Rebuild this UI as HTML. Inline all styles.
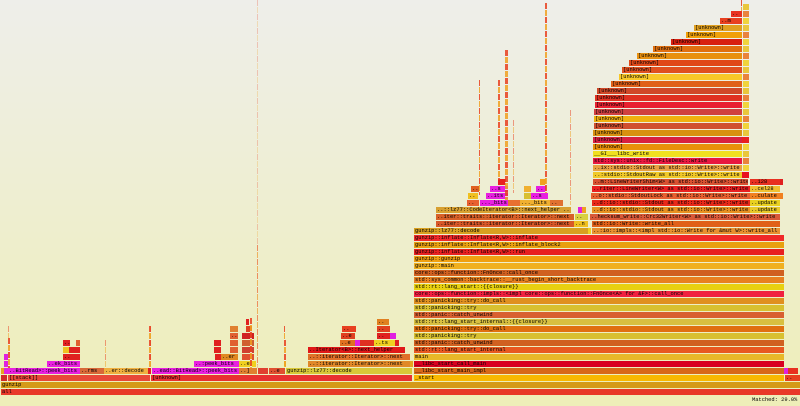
<!DOCTYPE html>
<html><head><meta charset="utf-8"><style>
body{margin:0;width:800px;height:406px;overflow:hidden;background:linear-gradient(#eeeeea,#eeeeb8);position:relative;font-family:"Liberation Mono",monospace}
.b{position:absolute;height:6px;font-size:5.4px;line-height:6.5px;overflow:hidden;white-space:nowrap;padding-left:1px;color:#000;box-sizing:border-box}
.s{position:absolute;width:2px;background:repeating-linear-gradient(#e84020 0 6px,#eee 6px 7px,#f0a020 7px 13px,#eee 13px 14px);opacity:.85}
</style></head><body>
<div class="b" style="top:389px;left:1px;width:799px;background:#e83828">all</div>
<div class="b" style="top:382px;left:1px;width:799px;background:#d49a18">gunzip</div>
<div class="b" style="top:375px;left:1px;width:6px;background:#d02828"></div>
<div class="b" style="top:375px;left:8px;width:142px;background:#e84838">[[stack]]</div>
<div class="b" style="top:375px;left:151px;width:261px;background:#e83030">[unknown]</div>
<div class="b" style="top:375px;left:414px;width:370px;background:#f8b800">_start</div>
<div class="b" style="top:375px;left:785px;width:15px;background:#e84020">..</div>
<div class="b" style="top:368px;left:1px;width:3px;background:#e8a020"></div>
<div class="b" style="top:368px;left:4px;width:4px;background:#e020e0"></div>
<div class="b" style="top:368px;left:8px;width:72px;background:#e820e0">..BitRead&gt;::peek_bits</div>
<div class="b" style="top:368px;left:80px;width:24px;background:#d86838">..rms</div>
<div class="b" style="top:368px;left:104px;width:44px;background:#f0b040">..er::decode</div>
<div class="b" style="top:368px;left:148px;width:3px;background:#e02020"></div>
<div class="b" style="top:368px;left:152px;width:87px;background:#e820e0">..ead::BitRead&gt;::peek_bits</div>
<div class="b" style="top:368px;left:239px;width:18px;background:#e08030">..]</div>
<div class="b" style="top:368px;left:258px;width:10px;background:#e04030"></div>
<div class="b" style="top:368px;left:269px;width:16px;background:#e05030">..e</div>
<div class="b" style="top:368px;left:286px;width:126px;background:#d8c838">gunzip::lz77::decode</div>
<div class="b" style="top:368px;left:414px;width:370px;background:#d86818">__libc_start_main_impl</div>
<div class="b" style="top:368px;left:784px;width:4px;background:#e020e0"></div>
<div class="b" style="top:368px;left:788px;width:10px;background:#e83020"></div>
<div class="b" style="top:361px;left:4px;width:4px;background:#e020e0"></div>
<div class="b" style="top:361px;left:47px;width:33px;background:#e820e0">..ek_bits</div>
<div class="b" style="top:361px;left:194px;width:45px;background:#e820e0">..:peek_bits</div>
<div class="b" style="top:361px;left:239px;width:17px;background:#f0d020">..e</div>
<div class="b" style="top:361px;left:284px;width:2px;background:#e0c040"></div>
<div class="b" style="top:361px;left:308px;width:102px;background:#e08828">..::iterator::Iterator&gt;::next</div>
<div class="b" style="top:361px;left:410px;width:3px;background:#e8a020"></div>
<div class="b" style="top:361px;left:414px;width:370px;background:#d80020">__libc_start_call_main</div>
<div class="b" style="top:354px;left:4px;width:4px;background:#e020e0"></div>
<div class="b" style="top:354px;left:63px;width:17px;background:#e02020">..</div>
<div class="b" style="top:354px;left:215px;width:6px;background:#e02020"></div>
<div class="b" style="top:354px;left:221px;width:17px;background:#e08820">..er</div>
<div class="b" style="top:354px;left:242px;width:12px;background:#e05030"></div>
<div class="b" style="top:354px;left:308px;width:102px;background:#e07028">..::iterator::Iterator&gt;::next</div>
<div class="b" style="top:354px;left:414px;width:370px;background:#e8b828">main</div>
<div class="b" style="top:347px;left:63px;width:6px;background:#f0c020"></div>
<div class="b" style="top:347px;left:69px;width:11px;background:#e02020"></div>
<div class="b" style="top:347px;left:214px;width:7px;background:#e02020"></div>
<div class="b" style="top:347px;left:230px;width:8px;background:#e06030"></div>
<div class="b" style="top:347px;left:242px;width:12px;background:#d04030"></div>
<div class="b" style="top:347px;left:308px;width:97px;background:#e01818">..Iterator&lt;B&gt;::next_helper</div>
<div class="b" style="top:347px;left:414px;width:370px;background:#e85820">std::rt::lang_start_internal</div>
<div class="b" style="top:340px;left:63px;width:7px;background:#e02020">..</div>
<div class="b" style="top:340px;left:76px;width:4px;background:#e06030"></div>
<div class="b" style="top:340px;left:214px;width:7px;background:#e02020"></div>
<div class="b" style="top:340px;left:230px;width:8px;background:#e06030"></div>
<div class="b" style="top:340px;left:242px;width:12px;background:#d06030"></div>
<div class="b" style="top:340px;left:340px;width:15px;background:#e07020">..e</div>
<div class="b" style="top:340px;left:355px;width:5px;background:#e020e0"></div>
<div class="b" style="top:340px;left:360px;width:14px;background:#e03020"></div>
<div class="b" style="top:340px;left:374px;width:21px;background:#f0d020">..ts</div>
<div class="b" style="top:340px;left:395px;width:4px;background:#e02020"></div>
<div class="b" style="top:340px;left:414px;width:370px;background:#d06020">std::panic::catch_unwind</div>
<div class="b" style="top:333px;left:230px;width:8px;background:#e06030">..</div>
<div class="b" style="top:333px;left:242px;width:12px;background:#d02020"></div>
<div class="b" style="top:333px;left:341px;width:14px;background:#e04020">..e</div>
<div class="b" style="top:333px;left:377px;width:13px;background:#e02020">..</div>
<div class="b" style="top:333px;left:390px;width:6px;background:#e020e0"></div>
<div class="b" style="top:333px;left:414px;width:370px;background:#d8c030">std::panicking::try</div>
<div class="b" style="top:326px;left:342px;width:14px;background:#e84020">..</div>
<div class="b" style="top:326px;left:377px;width:13px;background:#e04020">..</div>
<div class="b" style="top:326px;left:230px;width:8px;background:#e08030"></div>
<div class="b" style="top:326px;left:246px;width:6px;background:#e04020"></div>
<div class="b" style="top:319px;left:377px;width:12px;background:#e08020">..</div>
<div class="b" style="top:319px;left:246px;width:3px;background:#e02020"></div>
<div class="b" style="top:326px;left:414px;width:370px;background:#e07010">std::panicking::try::do_call</div>
<div class="b" style="top:319px;left:414px;width:370px;background:#d8c040">std::rt::lang_start_internal::{{closure}}</div>
<div class="b" style="top:312px;left:414px;width:370px;background:#d86030">std::panic::catch_unwind</div>
<div class="b" style="top:305px;left:414px;width:370px;background:#d8c030">std::panicking::try</div>
<div class="b" style="top:298px;left:414px;width:370px;background:#e09020">std::panicking::try::do_call</div>
<div class="b" style="top:291px;left:414px;width:370px;background:#f02040">core::ops::function::impls::&lt;impl core::ops::function::FnOnce&lt;A&gt; for &amp;F&gt;::call_once</div>
<div class="b" style="top:284px;left:414px;width:370px;background:#e8d010">std::rt::lang_start::{{closure}}</div>
<div class="b" style="top:277px;left:414px;width:370px;background:#e88020">std::sys_common::backtrace::__rust_begin_short_backtrace</div>
<div class="b" style="top:270px;left:414px;width:370px;background:#d06020">core::ops::function::FnOnce::call_once</div>
<div class="b" style="top:263px;left:414px;width:370px;background:#f0b020">gunzip::main</div>
<div class="b" style="top:256px;left:414px;width:370px;background:#f0a010">gunzip::gunzip</div>
<div class="b" style="top:249px;left:414px;width:370px;background:#e82020">gunzip::inflate::Inflate&lt;R,W&gt;::run</div>
<div class="b" style="top:242px;left:414px;width:370px;background:#e8a010">gunzip::inflate::Inflate&lt;R,W&gt;::inflate_block2</div>
<div class="b" style="top:235px;left:414px;width:370px;background:#f02828">gunzip::inflate::Inflate&lt;R,W&gt;::inflate</div>
<div class="b" style="top:228px;left:414px;width:174px;background:#d8a020">gunzip::lz77::decode</div>
<div class="b" style="top:228px;left:588px;width:3px;background:#f0d020"></div>
<div class="b" style="top:228px;left:592px;width:188px;background:#e89030">..:io::impls::&lt;impl std::io::Write for &amp;mut W&gt;::write_all</div>
<div class="b" style="top:221px;left:436px;width:138px;background:#d85828">..iter::traits::iterator::Iterator&gt;::next</div>
<div class="b" style="top:221px;left:574px;width:14px;background:#f0c020">..n</div>
<div class="b" style="top:221px;left:592px;width:188px;background:#e06018">std::io::Write::write_all</div>
<div class="b" style="top:214px;left:436px;width:138px;background:#d86028">..iter::traits::iterator::Iterator&gt;::next</div>
<div class="b" style="top:214px;left:575px;width:13px;background:#d8d040">..</div>
<div class="b" style="top:214px;left:590px;width:190px;background:#d85838">..hecksum_write::Crc32Writer&lt;W&gt; as std::io::Write&gt;::write</div>
<div class="b" style="top:207px;left:436px;width:135px;background:#d8a030">..::lz77::CodeIterator&lt;B&gt;::next_helper ..</div>
<div class="b" style="top:207px;left:578px;width:4px;background:#e020e0"></div>
<div class="b" style="top:207px;left:582px;width:4px;background:#f0a020"></div>
<div class="b" style="top:207px;left:592px;width:158px;background:#e89020">..d::io::stdio::Stdout as std::io::Write&gt;::write</div>
<div class="b" style="top:207px;left:750px;width:30px;background:#e8c828">..update</div>
<div class="b" style="top:200px;left:467px;width:12px;background:#e86030">..</div>
<div class="b" style="top:200px;left:480px;width:28px;background:#e820e0">..._bits</div>
<div class="b" style="top:200px;left:508px;width:12px;background:#e87030"></div>
<div class="b" style="top:200px;left:520px;width:30px;background:#f0b030">..._bits</div>
<div class="b" style="top:200px;left:550px;width:13px;background:#e07030">..</div>
<div class="b" style="top:200px;left:592px;width:158px;background:#e82818">..d::io::stdio::Stdout as std::io::Write&gt;::write</div>
<div class="b" style="top:200px;left:750px;width:30px;background:#e8d020">..update</div>
<div class="b" style="top:193px;left:468px;width:10px;background:#f0c020">..</div>
<div class="b" style="top:193px;left:486px;width:22px;background:#e820e0">..its</div>
<div class="b" style="top:193px;left:524px;width:7px;background:#d8c030"></div>
<div class="b" style="top:193px;left:531px;width:17px;background:#e820e0">..s</div>
<div class="b" style="top:193px;left:591px;width:159px;background:#e86030">..o::stdio::StdoutLock as std::io::Write&gt;::write</div>
<div class="b" style="top:193px;left:750px;width:33px;background:#f08020">..culate</div>
<div class="b" style="top:186px;left:471px;width:8px;background:#e06020">..</div>
<div class="b" style="top:186px;left:490px;width:18px;background:#e820e0">..s</div>
<div class="b" style="top:186px;left:524px;width:7px;background:#f0b030"></div>
<div class="b" style="top:186px;left:536px;width:10px;background:#e820e0">..</div>
<div class="b" style="top:186px;left:592px;width:158px;background:#e82020">..riter::LineWriter&lt;W&gt; as std::io::Write&gt;::write</div>
<div class="b" style="top:186px;left:750px;width:30px;background:#f0c030">..cel28</div>
<div class="b" style="top:179px;left:498px;width:8px;background:#e82020"></div>
<div class="b" style="top:179px;left:540px;width:6px;background:#f0a020"></div>
<div class="b" style="top:179px;left:593px;width:155px;background:#d85030">..m::LineWriterShim&lt;W&gt; as std::io::Write&gt;::write</div>
<div class="b" style="top:179px;left:750px;width:30px;background:#e83020">..128</div>
<div class="b" style="top:172px;left:593px;width:149px;background:#f0c828">..:stdio::StdoutRaw as std::io::Write&gt;::write</div>
<div class="b" style="top:165px;left:593px;width:149px;background:#e8a040">..ix::stdio::Stdout as std::io::Write&gt;::write</div>
<div class="b" style="top:158px;left:593px;width:149px;background:#e81840">std::sys::unix::fd::FileDesc::write</div>
<div class="b" style="top:151px;left:593px;width:149px;background:#f0e020">__GI___libc_write</div>
<div class="b" style="top:144px;left:593px;width:149px;background:#e8900a">[unknown]</div>
<div class="b" style="top:137px;left:593px;width:149px;background:#d82040">[unknown]</div>
<div class="b" style="top:130px;left:593px;width:149px;background:#d89010">[unknown]</div>
<div class="b" style="top:123px;left:594px;width:148px;background:#d05030">[unknown]</div>
<div class="b" style="top:116px;left:594px;width:148px;background:#f0b010">[unknown]</div>
<div class="b" style="top:109px;left:594px;width:148px;background:#d04040">[unknown]</div>
<div class="b" style="top:102px;left:595px;width:147px;background:#e82030">[unknown]</div>
<div class="b" style="top:95px;left:595px;width:147px;background:#e03020">[unknown]</div>
<div class="b" style="top:88px;left:597px;width:145px;background:#d04828">[unknown]</div>
<div class="b" style="top:81px;left:611px;width:131px;background:#e06018">[unknown]</div>
<div class="b" style="top:74px;left:619px;width:123px;background:#f8c828">[unknown]</div>
<div class="b" style="top:67px;left:622px;width:120px;background:#e05020">[unknown]</div>
<div class="b" style="top:60px;left:629px;width:113px;background:#e04818">[unknown]</div>
<div class="b" style="top:53px;left:637px;width:105px;background:#e89010">[unknown]</div>
<div class="b" style="top:46px;left:653px;width:89px;background:#e07010">[unknown]</div>
<div class="b" style="top:39px;left:671px;width:71px;background:#d82010">[unknown]</div>
<div class="b" style="top:32px;left:686px;width:56px;background:#f0a008">[unknown]</div>
<div class="b" style="top:25px;left:694px;width:48px;background:#e0a020">[unknown]</div>
<div class="b" style="top:18px;left:720px;width:22px;background:#e84020">..m</div>
<div class="b" style="top:11px;left:731px;width:11px;background:#e83020">..</div>
<div class="s" style="top:0;left:741px;height:11px;width:1px"></div>
<div class="s" style="top:4px;left:743px;height:168px;width:6px;background:repeating-linear-gradient(#e8c020 0 6px,#eee 6px 7px,#e87020 7px 13px,#eee 13px 14px,#f0d020 14px 20px,#eee 20px 21px)"></div>
<div class="b" style="top:172px;left:742px;width:7px;background:#e81020"></div>
<div class="b" style="top:137px;left:742px;width:7px;background:#e82020"></div>
<div class="b" style="top:179px;left:780px;width:3px;background:#e02020"></div>
<div class="s" style="top:50px;left:505px;height:150px;width:3px"></div>
<div class="s" style="top:3px;left:545px;height:190px;width:2px"></div>
<div class="s" style="top:80px;left:479px;height:115px;width:1px"></div>
<div class="s" style="top:120px;left:513px;height:73px;width:1px;opacity:.5"></div>
<div class="s" style="top:110px;left:570px;height:95px;width:1px;opacity:.5"></div>
<div class="s" style="top:80px;left:498px;height:100px;width:2px"></div>
<div class="s" style="top:0;left:257px;height:368px;width:1px;opacity:.25"></div>
<div class="s" style="top:245px;left:257px;height:120px;width:1px;opacity:.5"></div>
<div class="s" style="top:318px;left:250px;height:50px;width:2px"></div>
<div class="s" style="top:326px;left:284px;height:40px;width:1px"></div>
<div class="s" style="top:326px;left:149px;height:42px;width:2px"></div>
<div class="s" style="top:338px;left:8px;height:30px;width:2px"></div>
<div class="s" style="top:326px;left:8px;height:12px;width:1px;opacity:.5"></div>
<div class="s" style="top:340px;left:105px;height:28px;width:1px;opacity:.5"></div>
<div class="s" style="top:326px;left:150px;height:42px;width:1px;opacity:.5"></div>
<div class="s" style="top:340px;left:285px;height:28px;width:1px"></div>
<div style="position:absolute;top:397px;left:752px;font:5.4px/7px 'Liberation Mono',monospace;color:#000">Matched: 29.0%</div>
</body></html>
